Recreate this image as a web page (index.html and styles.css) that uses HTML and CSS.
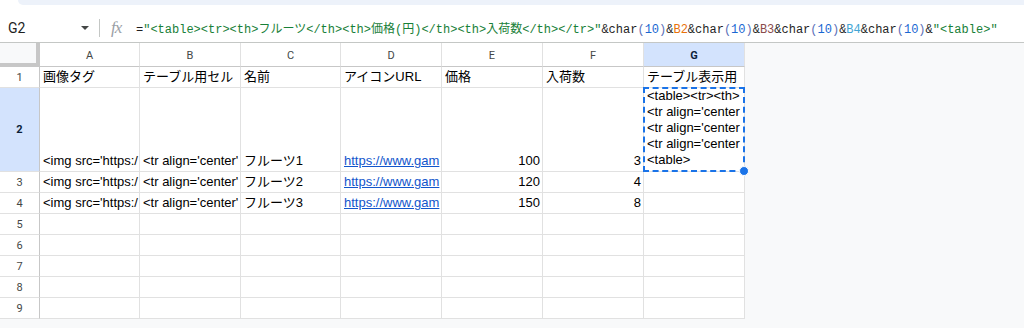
FILE: index.html
```html
<!DOCTYPE html>
<html lang="ja">
<head>
    <meta charset="UTF-8">
    <title>Sheet</title>
    <link rel="stylesheet" href="styles.css">
</head>
<body>
    <div class="toolbar-edge"></div>

    <div class="formula-bar">
        <div class="name-box">
            <span class="cell-name">G2</span>
            <span class="caret"></span>
        </div>
        <div class="divider"></div>
        <span class="fx">fx</span>
        <div class="formula"><span class="op">=</span><span class="str">"&lt;table&gt;&lt;tr&gt;&lt;th&gt;フルーツ&lt;/th&gt;&lt;th&gt;価格(円)&lt;/th&gt;&lt;th&gt;入荷数&lt;/th&gt;&lt;/tr&gt;"</span><span class="op">&amp;char</span><span class="paren">(</span><span class="num">10</span><span class="paren">)</span><span class="op">&amp;</span><span class="ref1">B2</span><span class="op">&amp;char</span><span class="paren">(</span><span class="num">10</span><span class="paren">)</span><span class="op">&amp;</span><span class="ref2">B3</span><span class="op">&amp;char</span><span class="paren">(</span><span class="num">10</span><span class="paren">)</span><span class="op">&amp;</span><span class="ref3">B4</span><span class="op">&amp;char</span><span class="paren">(</span><span class="num">10</span><span class="paren">)</span><span class="op">&amp;</span><span class="str">"&lt;table&gt;"</span></div>
    </div>

    <div class="sheet-wrap">
        <div class="sheet">
            <!-- column headers -->
            <div class="corner"></div>
            <div class="col-head">A</div>
            <div class="col-head">B</div>
            <div class="col-head">C</div>
            <div class="col-head">D</div>
            <div class="col-head">E</div>
            <div class="col-head">F</div>
            <div class="col-head active">G</div>

            <!-- row 1 -->
            <div class="row-head">1</div>
            <div class="cell">画像タグ</div>
            <div class="cell">テーブル用セル</div>
            <div class="cell">名前</div>
            <div class="cell">アイコンURL</div>
            <div class="cell">価格</div>
            <div class="cell">入荷数</div>
            <div class="cell">テーブル表示用</div>

            <!-- row 2 -->
            <div class="row-head active">2</div>
            <div class="cell">&lt;img src='https:/</div>
            <div class="cell">&lt;tr align='center'</div>
            <div class="cell">フルーツ1</div>
            <div class="cell"><a class="link">https://www.gam</a></div>
            <div class="cell num">100</div>
            <div class="cell num">3</div>
            <div class="cell wrap selected">
                <div class="lines">&lt;table&gt;&lt;tr&gt;&lt;th&gt;<br>&lt;tr align='center<br>&lt;tr align='center<br>&lt;tr align='center<br>&lt;table&gt;</div>
                <span class="handle"></span>
            </div>

            <!-- row 3 -->
            <div class="row-head">3</div>
            <div class="cell">&lt;img src='https:/</div>
            <div class="cell">&lt;tr align='center'</div>
            <div class="cell">フルーツ2</div>
            <div class="cell"><a class="link">https://www.gam</a></div>
            <div class="cell num">120</div>
            <div class="cell num">4</div>
            <div class="cell"></div>

            <!-- row 4 -->
            <div class="row-head">4</div>
            <div class="cell">&lt;img src='https:/</div>
            <div class="cell">&lt;tr align='center'</div>
            <div class="cell">フルーツ3</div>
            <div class="cell"><a class="link">https://www.gam</a></div>
            <div class="cell num">150</div>
            <div class="cell num">8</div>
            <div class="cell"></div>

            <div class="row-head">5</div>
            <div class="cell"></div><div class="cell"></div><div class="cell"></div><div class="cell"></div><div class="cell"></div><div class="cell"></div><div class="cell"></div>
            <div class="row-head">6</div>
            <div class="cell"></div><div class="cell"></div><div class="cell"></div><div class="cell"></div><div class="cell"></div><div class="cell"></div><div class="cell"></div>
            <div class="row-head">7</div>
            <div class="cell"></div><div class="cell"></div><div class="cell"></div><div class="cell"></div><div class="cell"></div><div class="cell"></div><div class="cell"></div>
            <div class="row-head">8</div>
            <div class="cell"></div><div class="cell"></div><div class="cell"></div><div class="cell"></div><div class="cell"></div><div class="cell"></div><div class="cell"></div>
            <div class="row-head">9</div>
            <div class="cell"></div><div class="cell"></div><div class="cell"></div><div class="cell"></div><div class="cell"></div><div class="cell"></div><div class="cell"></div>
        </div>
    </div>
</body>
</html>
```

FILE: styles.css
```css
body {
    margin: 0;
    padding: 0;
    background: #ffffff;
    font-family: "Liberation Sans", Arial, "Noto Sans CJK JP", sans-serif;
    color: #000;
    overflow: hidden;
}
.toolbar-edge {
    height: 5px;
    margin-left: 18px;
    background: #edf2fa;
    border-bottom-left-radius: 8px;
}

/* formula bar */
.formula-bar {
    display: flex;
    align-items: center;
    height: 28px;
    margin-top: 9px;
    border-bottom: 1px solid #c4c7c5;
    background: #ffffff;
}
.name-box {
    display: flex;
    align-items: center;
    width: 92px;
    padding-left: 8px;
    box-sizing: border-box;
}
.cell-name {
    font-family: Roboto, "Liberation Sans", sans-serif;
    font-size: 14px;
    color: #1f1f1f;
    flex: 1;
}
.caret {
    width: 0;
    height: 0;
    border-left: 4px solid transparent;
    border-right: 4px solid transparent;
    border-top: 4px solid #444746;
    margin-right: 3px;
}
.divider {
    width: 1px;
    height: 18px;
    background: #c4c7c5;
    margin-left: 7px;
}
.fx {
    font-family: "Liberation Serif", serif;
    font-style: italic;
    font-size: 17px;
    color: #9aa0a6;
    margin-left: 11px;
    width: 25px;
    letter-spacing: -1px;
}
.formula {
    font-family: "Liberation Mono", "Noto Sans CJK JP", monospace;
    font-size: 12px;
    white-space: nowrap;
    color: #1f1f1f;
}
.formula .str { color: #188038; }
.formula .op { color: #1f1f1f; }
.formula .num { color: #1967d2; }
.formula .paren { color: #5b6fb8; }
.formula .ref1 { color: #e8710a; }
.formula .ref2 { color: #8a4b4b; }
.formula .ref3 { color: #42a5d5; }

/* grid */
.sheet-wrap {
    background: #f8f9fa;
    height: 300px;
}
.sheet {
    display: grid;
    grid-template-columns: 40px 100px 101px 100px 101px 101px 101px 101px;
    grid-template-rows: 24px 21px 84px repeat(7, 21px);
    width: 745px;
    background: #ffffff;
}
.corner {
    background: #f8f9fa;
    border-right: 4px solid #c7c7c7;
    border-bottom: 4px solid #c7c7c7;
    box-sizing: border-box;
}
.col-head {
    display: flex;
    align-items: center;
    justify-content: center;
    font-family: Roboto, "Liberation Sans", sans-serif;
    font-size: 11px;
    color: #444746;
    border-right: 1px solid #e1e1e1;
    border-bottom: 1px solid #c7c7c7;
    box-sizing: border-box;
    padding-top: 1px;
}
.col-head.active {
    background: #d3e3fd;
    color: #0b1f3a;
    font-weight: bold;
}
.row-head {
    display: flex;
    align-items: center;
    justify-content: center;
    font-family: Roboto, "Liberation Sans", sans-serif;
    font-size: 11px;
    color: #444746;
    border-right: 1px solid #c7c7c7;
    border-bottom: 1px solid #e1e1e1;
    box-sizing: border-box;
}
.row-head.active {
    background: #d3e3fd;
    color: #0b1f3a;
    font-weight: bold;
}
.cell {
    display: flex;
    align-items: flex-end;
    font-size: 13px;
    line-height: 16px;
    padding: 0 2px 2px 3px;
    border-right: 1px solid #e1e1e1;
    border-bottom: 1px solid #e1e1e1;
    box-sizing: border-box;
    white-space: nowrap;
    overflow: hidden;
    color: #000;
}
.cell.num {
    justify-content: flex-end;
}
.link {
    color: #1155cc;
    text-decoration: underline;
}
.cell.wrap {
    overflow: visible;
    position: relative;
}
.cell.wrap .lines {
    overflow: hidden;
    width: 100%;
    line-height: 16px;
    padding-bottom: 1px;
}
.selected::after {
    content: "";
    position: absolute;
    left: -1px;
    top: -1px;
    right: -1px;
    bottom: -1px;
    border: 2px dashed #1a73e8;
    pointer-events: none;
}
.handle {
    position: absolute;
    right: -5px;
    bottom: -5px;
    width: 8px;
    height: 8px;
    border-radius: 50%;
    background: #1a73e8;
    border: 1px solid #ffffff;
    z-index: 2;
}
```
